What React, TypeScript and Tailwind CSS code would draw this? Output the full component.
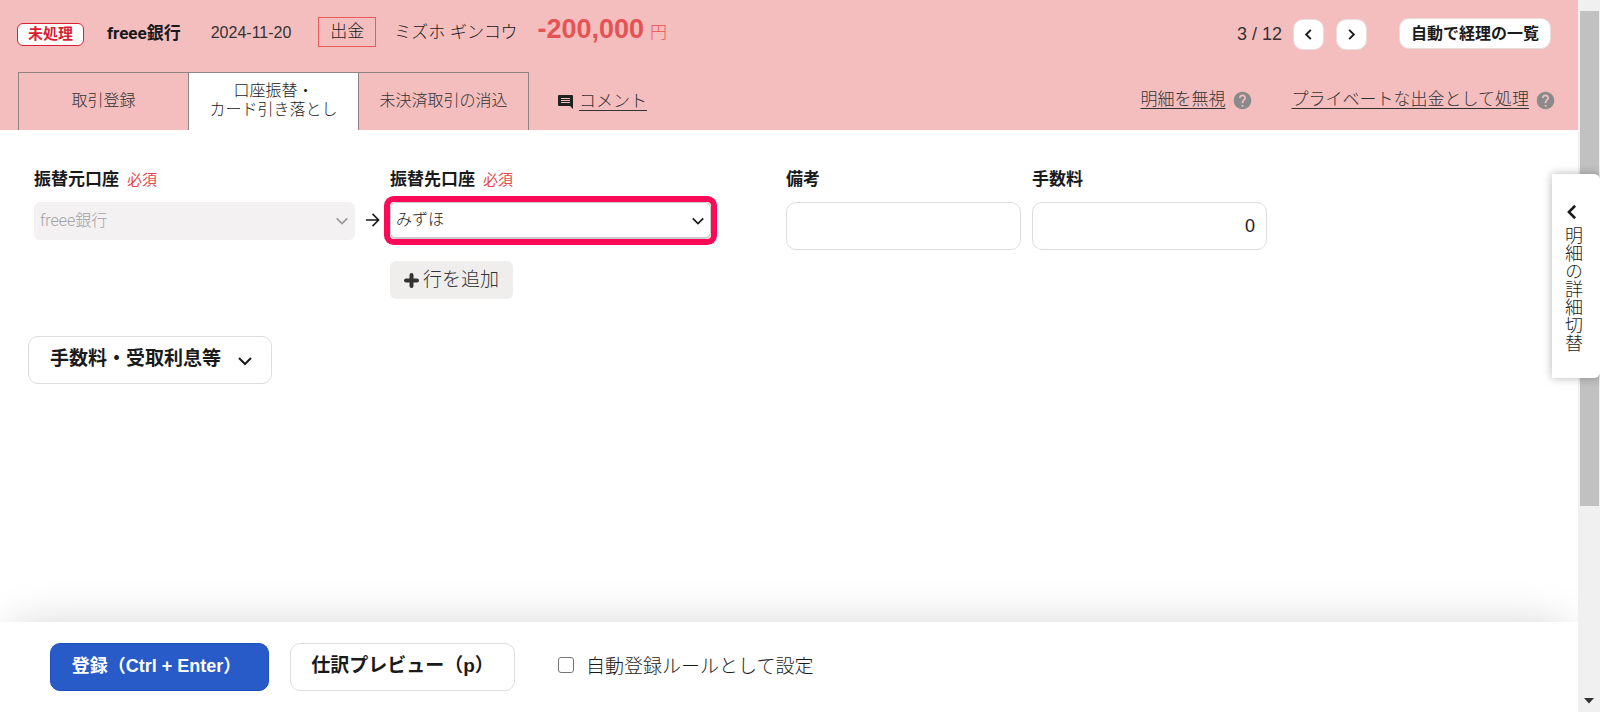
import React, { useState } from 'react';
import { MdHelp } from 'react-icons/md';

type ChevronProps = {
    points: string;
    className?: string;
    strokeWidth?: number;
};

const Chevron: React.FC<ChevronProps> = ({ points, className, strokeWidth = 2 }) => (
    <svg viewBox="0 0 16 16" fill="none" stroke="currentColor" strokeWidth={strokeWidth} className={className} aria-hidden="true">
        <polyline points={points} />
    </svg>
);

const LEFT = '10.5,3 5.5,8 10.5,13';
const RIGHT = '5.5,3 10.5,8 5.5,13';
const DOWN = '2,5 8,11 14,5';

const Required: React.FC = () => <span className="ml-2 text-[15px] font-normal text-[#e5484d]">必須</span>;

const Header: React.FC = () => (
    <header className="bg-[#f4bebe]">
        {/* Statement summary */}
        <div className="flex h-[72px] items-start pl-[17px] pr-[27px] pt-[17px] text-[17px] leading-[30px]">
            <span className="mt-[6px] h-[23px] w-[67px] rounded-md border border-[#dc1e32] bg-white text-center text-[15px] leading-[20px] font-bold text-[#dc1e32]">未処理</span>
            <span className="ml-[23px] font-['Roboto','Noto_Sans_CJK_JP',sans-serif] leading-[32px] font-bold">freee銀行</span>
            <span className="ml-[30px] text-[16px] leading-[32px] text-[#333]">2024-11-20</span>
            <span className="ml-[27px] h-[30px] w-[58px] border border-[#e85b5b] text-center leading-[28px]">出金</span>
            <span className="ml-[18px] leading-[32px]">ミズホ ギンコウ</span>
            <span className="ml-5 text-[27px] leading-[24px] font-bold text-[#e55454]">-200,000</span>
            <span className="ml-[6px] leading-[32px] text-[#e55454]">円</span>
            <div className="ml-auto flex items-center">
                <span className="mr-[11px] text-[18px] text-[#333]">3 / 12</span>
                <button type="button" aria-label="前へ" className="mt-[2px] mr-3 flex h-[31px] w-[31px] items-center justify-center rounded-[10px] border border-[#e8dede] bg-white">
                    <Chevron points={LEFT} className="h-[15px] w-[15px]" />
                </button>
                <button type="button" aria-label="次へ" className="mt-[2px] mr-8 flex h-[31px] w-[31px] items-center justify-center rounded-[10px] border border-[#e8dede] bg-white">
                    <Chevron points={RIGHT} className="h-[15px] w-[15px]" />
                </button>
                <button type="button" className="h-[31px] rounded-[10px] border border-[#e8dede] bg-white px-[11px] text-[16px] leading-[27px] font-bold">自動で経理の一覧</button>
            </div>
        </div>

        {/* Tabs and links */}
        <div className="flex h-[58px] pl-[18px] pr-[22px] text-[17px]">
            <nav className="flex text-[16px] leading-[19px]">
                <button type="button" className="w-[170px] border-t border-l border-[#8f8484] pb-[2px] text-[#333]">取引登録</button>
                <button type="button" className="w-[170px] border-t border-l border-[#8f8484] bg-white pb-1">
                    口座振替・<br />カード引き落とし
                </button>
                <button type="button" className="w-[171px] border-x border-t border-[#8f8484] pb-[2px] text-[#333]">未決済取引の消込</button>
            </nav>
            <a href="#" className="ml-[29px] flex items-center pt-[2px] text-[#333]">
                <svg viewBox="0 0 15 14" className="mr-[6px] h-[14px] w-[15px]" aria-hidden="true">
                    <path d="M1 0h13a1 1 0 0 1 1 1v13l-3-3H1a1 1 0 0 1-1-1V1a1 1 0 0 1 1-1z" fill="#222" />
                    <path d="M3 3.5h9M3 5.5h9M3 7.5h9" stroke="#f4bebe" strokeWidth="1" />
                </svg>
                <span className="underline underline-offset-3">コメント</span>
            </a>
            <div className="ml-auto flex items-center pb-[2px] text-[#333]">
                <a href="#" className="underline underline-offset-3">明細を無視</a>
                <MdHelp className="ml-[6px] h-[21px] w-[21px] text-[#8a8a8a]" />
                <a href="#" className="ml-[39px] underline underline-offset-3">プライベートな出金として処理</a>
                <MdHelp className="ml-[6px] h-[21px] w-[21px] text-[#8a8a8a]" />
            </div>
        </div>
    </header>
);

const TransferForm: React.FC = () => {
    const [note, setNote] = useState('');
    const [fee, setFee] = useState('0');

    return (
        <main className="flex-1 pt-9">
            <div className="flex items-start pl-[34px]">
                <div className="w-[321px]">
                    <label htmlFor="from" className="flex h-7 items-center text-[17px] font-bold">振替元口座<Required /></label>
                    <div className="relative mt-2">
                        <select id="from" disabled className="h-[38px] w-full appearance-none rounded-md bg-[#f3f1f2] px-[6px] font-['Roboto','Noto_Sans_CJK_JP',sans-serif] text-[16px] text-[#a3a1a2] opacity-100">
                            <option>freee銀行</option>
                        </select>
                        <Chevron points={DOWN} className="pointer-events-none absolute top-3 right-[6px] h-[14px] w-[14px] text-[#999]" />
                    </div>
                </div>

                <svg viewBox="0 0 16 16" fill="none" stroke="currentColor" strokeWidth="1.7" className="mx-[10px] mt-[46px] h-[16px] w-[15px]" aria-hidden="true">
                    <path d="M1 8h13.500M8 1.500l6.500 6.500L8 14.500" />
                </svg>

                <div className="w-[321px]">
                    <label htmlFor="to" className="flex h-7 items-center text-[17px] font-bold">振替先口座<Required /></label>
                    <div className="relative mt-2 rounded-sm ring-6 ring-[#fb0a58]">
                        <select id="to" className="block h-[37px] w-full appearance-none rounded-md border border-b-2 border-[#ccc] bg-white px-[5px] text-[16px]">
                            <option>みずほ</option>
                        </select>
                        <Chevron points={DOWN} className="pointer-events-none absolute top-3 right-[6px] h-[14px] w-[14px]" />
                    </div>
                    <button type="button" className="mt-[22px] flex h-[38px] w-[123px] items-center justify-center rounded-md bg-[#efeeed] text-[19px] text-[#333]">
                        <svg viewBox="0 0 15 15" className="mr-1 h-[15px] w-[15px]" aria-hidden="true">
                            <path d="M7.500 2v11M2 7.500h11" stroke="#333" strokeWidth="4" strokeLinecap="round" />
                        </svg>
                        行を追加
                    </button>
                </div>

                <div className="ml-[75px] w-[235px]">
                    <label htmlFor="note" className="flex h-7 items-center text-[17px] font-bold">備考</label>
                    <input id="note" type="text" value={note} onChange={(e) => setNote(e.target.value)} className="mt-2 h-12 w-full rounded-[10px] border border-[#ddd] bg-white px-3 text-[18px]" />
                </div>
                <div className="ml-[11px] w-[235px]">
                    <label htmlFor="fee" className="flex h-7 items-center text-[17px] font-bold">手数料</label>
                    <input id="fee" type="text" value={fee} onChange={(e) => setFee(e.target.value)} className="mt-2 h-12 w-full rounded-[10px] border border-[#ddd] bg-white px-[11px] text-right text-[18px]" />
                </div>
            </div>

            <button type="button" className="mt-[37px] ml-7 flex h-12 w-[244px] items-center rounded-[10px] border border-[#ddd] bg-white pb-[2px] pl-[21px] text-[19px] font-bold">
                手数料・受取利息等
                <Chevron points={DOWN} className="mt-1 ml-4 h-[16px] w-[16px]" />
            </button>
        </main>
    );
};

const ActionBar: React.FC = () => (
    <footer className="flex h-[90px] items-start bg-white pt-[21px] pl-[50px] text-[19px] shadow-[0_-6px_48px_-12px_rgba(0,0,0,0.2)]">
        <button type="button" className="h-12 w-[219px] rounded-[10px] border border-[#1d4fc0] bg-[#285ac8] pr-[6px] pb-[2px] text-[18px] font-bold text-white">登録（Ctrl + Enter）</button>
        <button type="button" className="ml-[21px] h-12 w-[225px] rounded-[10px] border border-[#ddd] bg-white pb-[2px] font-bold">仕訳プレビュー（p）</button>
        <label className="ml-[43px] flex h-12 items-center">
            <input type="checkbox" className="mr-3 mb-1 h-4 w-4 appearance-none rounded-[3px] border border-[#767676] bg-white checked:bg-[#285ac8]" />
            自動登録ルールとして設定
        </label>
    </footer>
);

const ScrollTrack: React.FC = () => (
    <div className="flex w-[22px] shrink-0 flex-col items-center bg-[#f0f0f0] pt-[11px] pb-2">
        <div className="h-[495px] w-[19px] bg-[#c1c1c1]" />
        <svg viewBox="0 0 10 6" className="mt-auto h-[6px] w-[10px]" aria-hidden="true">
            <path d="M0 0h10L5 5.500z" fill="#333" />
        </svg>
    </div>
);

const App: React.FC = () => (
    <div className="relative flex min-h-screen bg-white font-['Liberation_Sans','Noto_Sans_CJK_JP',sans-serif] font-light text-[#1a1a1a]">
        <div className="flex min-w-0 flex-1 flex-col overflow-hidden">
            <Header />
            <TransferForm />
            <ActionBar />
        </div>
        <ScrollTrack />

        {/* Detail drawer handle, floats over the page edge */}
        <button type="button" className="absolute top-[174px] right-0 flex h-[204px] w-12 flex-col items-center rounded-r-md bg-white pt-[28px] pr-2 shadow-[0_0_10px_rgba(0,0,0,0.3)]">
            <Chevron points={LEFT} className="h-[20px] w-[20px]" />
            <span className="mt-1 text-[18px] leading-[24px] [writing-mode:vertical-rl]">明細の詳細切替</span>
        </button>
    </div>
);

export default App;
